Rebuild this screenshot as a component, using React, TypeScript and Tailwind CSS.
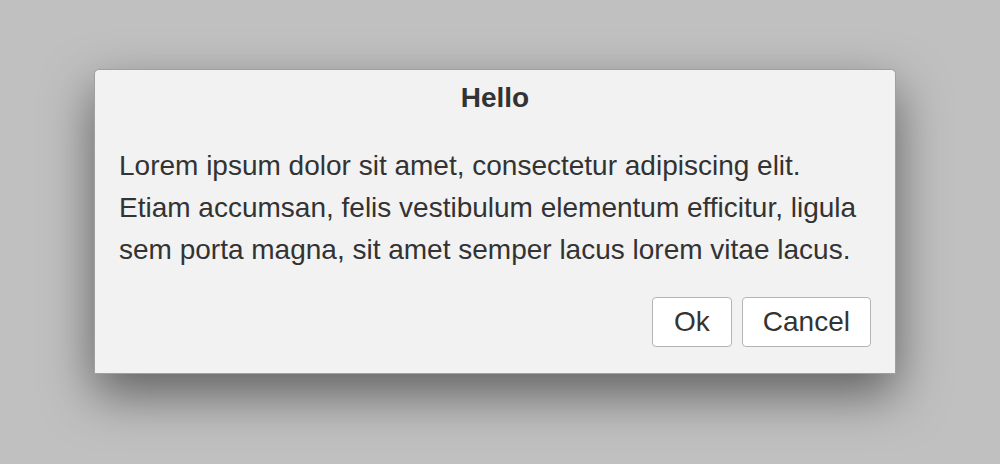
export default function App() {
  return (
    <div
      className="h-[464px] w-[1000px] bg-[#c0c0c0] pt-[69px] pl-[94px] text-[#333333]"
      style={{ fontFamily: '"Liberation Sans", Arial, sans-serif' }}
    >
      <div className="flex h-[305px] w-[802px] flex-col rounded-t-[5px] border border-[#a0a0a0] bg-[#f2f2f2] shadow-[0_20px_50px_rgba(0,0,0,0.5)]">
        <h1 className="mt-[7px] text-center text-[28px] font-bold leading-[42px]">Hello</h1>
        <p className="mt-[26px] px-6 text-[28px] leading-[42px]">
          Lorem ipsum dolor sit amet, consectetur adipiscing elit. Etiam accumsan, felis vestibulum
          elementum efficitur, ligula sem porta magna, sit amet semper lacus lorem vitae lacus.
        </p>
        <div className="mt-[26px] flex justify-end gap-[10px] pr-[24px]">
          <button className="h-[50px] rounded-[4px] border border-[#b4b4b4] bg-white px-[21px] text-[28px] leading-none">
            Ok
          </button>
          <button className="h-[50px] rounded-[4px] border border-[#b4b4b4] bg-white px-5 text-[28px] leading-none">
            Cancel
          </button>
        </div>
      </div>
    </div>
  );
}
